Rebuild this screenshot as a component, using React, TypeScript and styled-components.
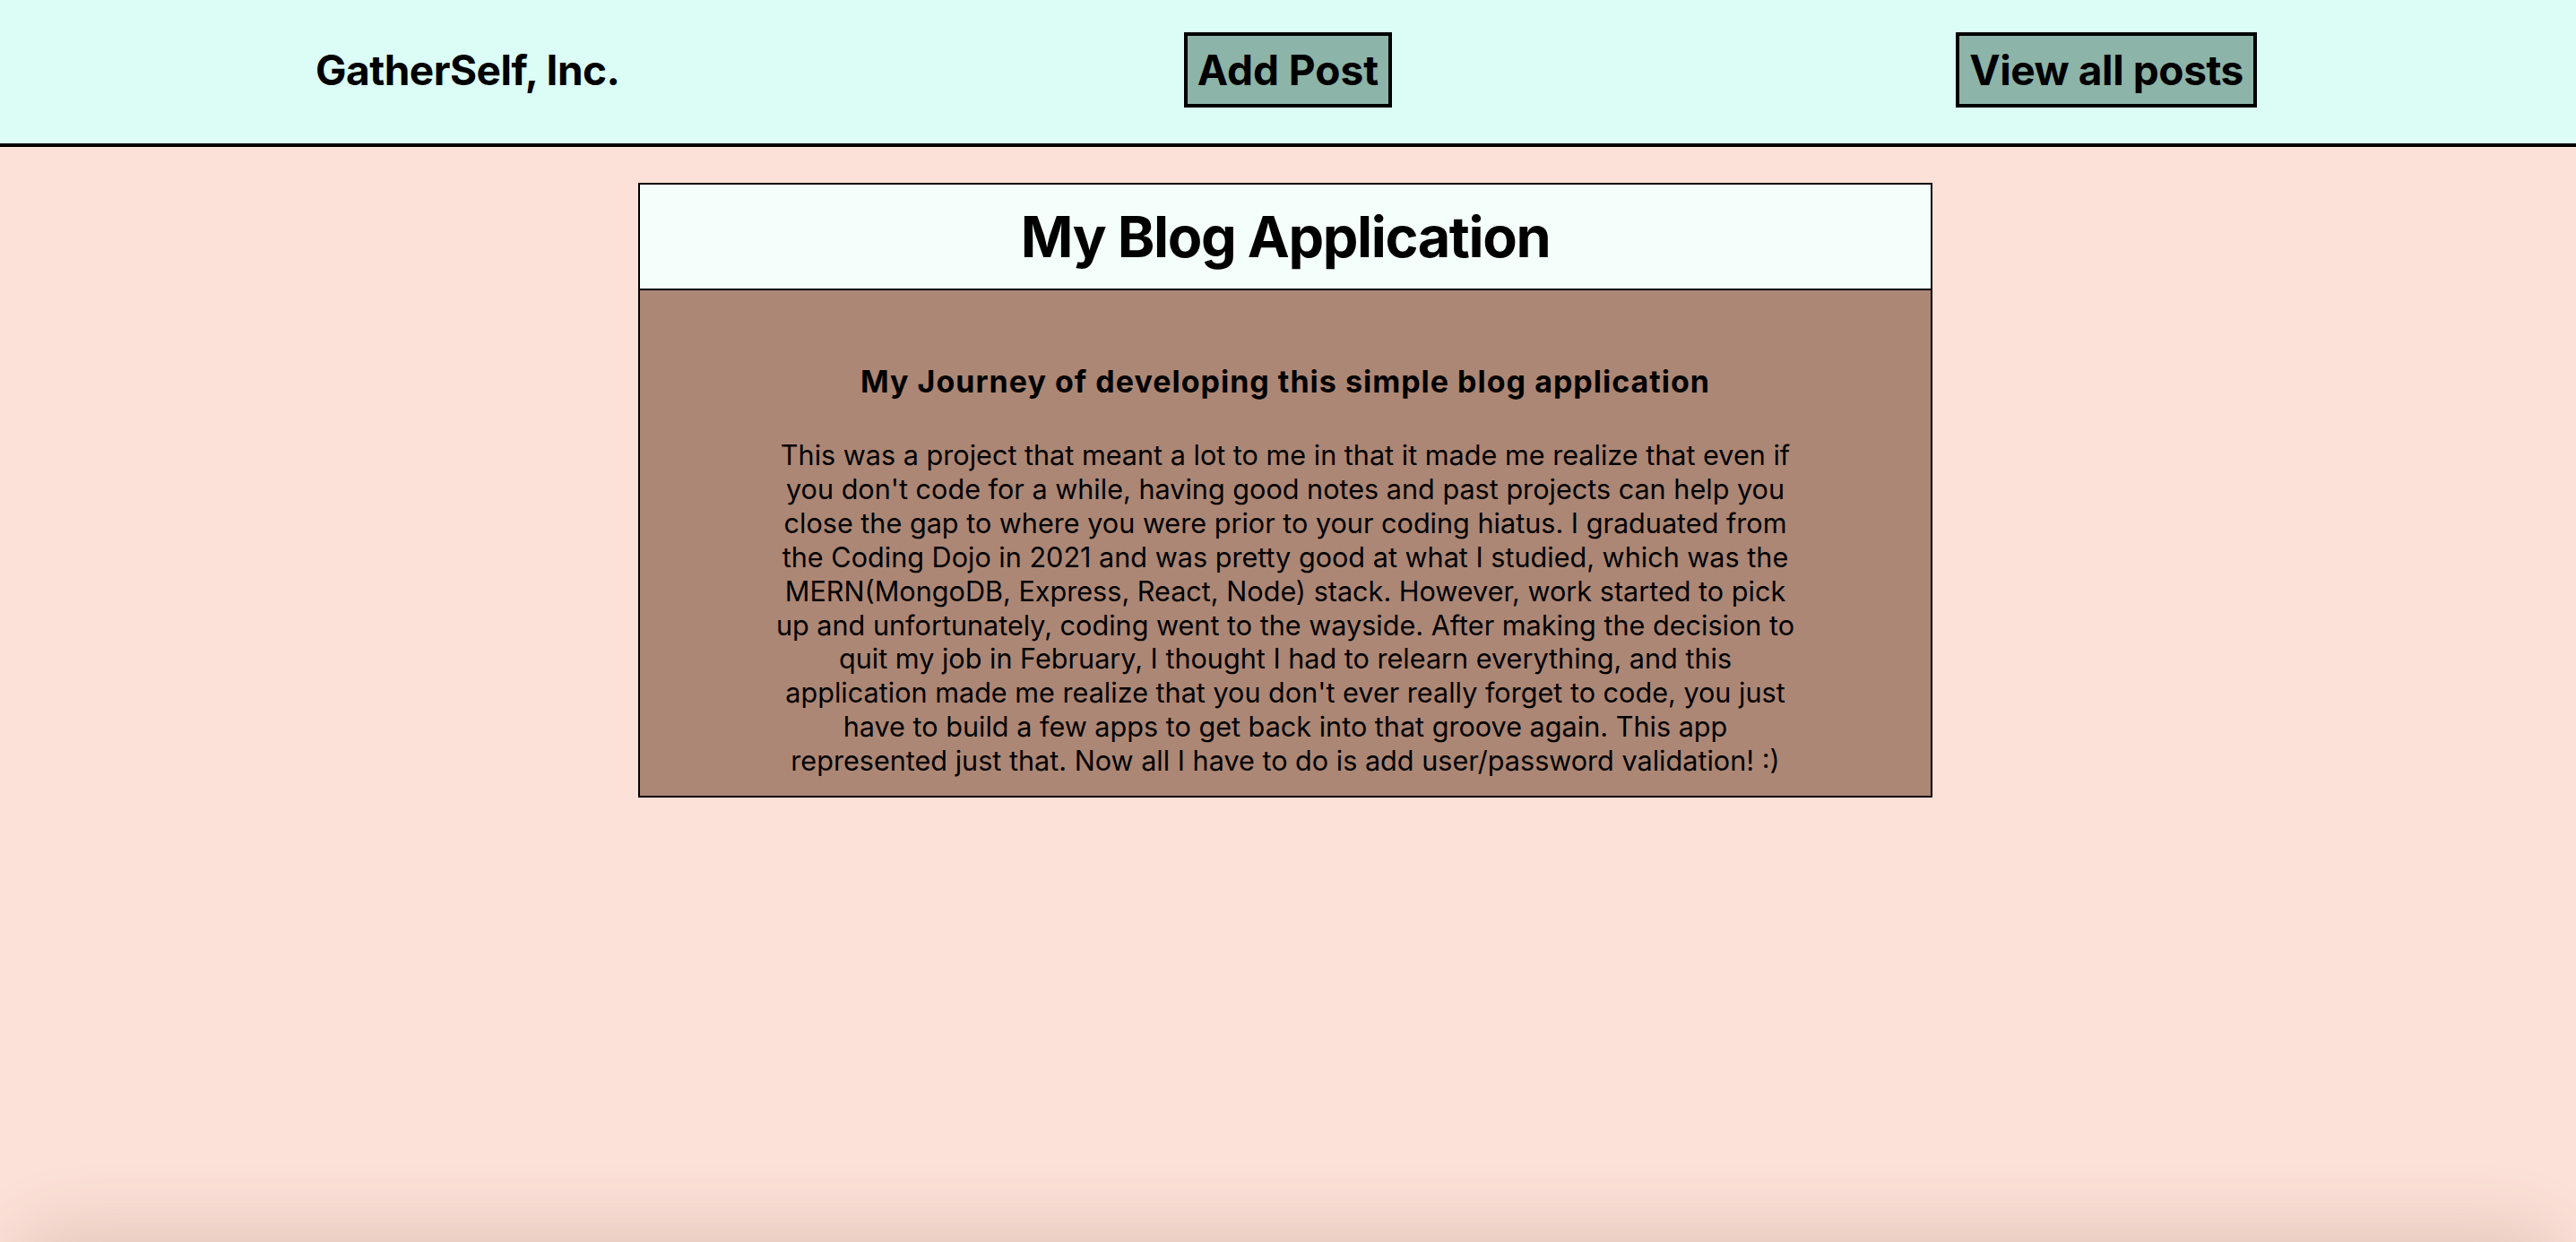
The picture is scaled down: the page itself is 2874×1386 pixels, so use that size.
import React from "react";
import styled, { createGlobalStyle } from "styled-components";

const GlobalStyle = createGlobalStyle`
  html, body {
    margin: 0;
    padding: 0;
    background: #fce1d8;
    font-family: Inter, "Noto Sans", "Liberation Sans", sans-serif;
    color: #000;
  }
  * { box-sizing: border-box; }
`;

const Page = styled.div`
  min-height: 100vh;
  background: #fce1d8;
`;

const Header = styled.header`
  height: 164px;
  display: flex;
  align-items: baseline;
  justify-content: space-between;
  padding: 36px 356px 0 352px;
  background: #dbfdf5;
  border-bottom: 4px solid #000;
`;

const Brand = styled.h2`
  margin: 0;
  font-size: 46px;
  line-height: 56px;
  font-weight: 700;
  letter-spacing: -0.5px;
`;

const NavButton = styled.button<{ $tight?: boolean }>`
  margin: 0;
  padding: 10px 11px;
  background: #8db4a8;
  border: 4px solid #000;
  font-family: inherit;
  font-size: 46px;
  line-height: 56px;
  font-weight: 700;
  letter-spacing: ${(p) => (p.$tight ? "-0.4px" : "0")};
  color: #000;
  cursor: pointer;
`;

const Main = styled.main`
  display: flex;
  justify-content: center;
  padding: 40px 6px 0 0;
`;

const Card = styled.section`
  width: 1444px;
  border: 2px solid #000;
`;

const TitleBar = styled.div`
  background: #f4fffb;
  border-bottom: 2px solid #000;
  padding: 20px 0;
  text-align: center;
`;

const Title = styled.h1`
  margin: 0;
  font-size: 63px;
  line-height: 76px;
  font-weight: 700;
  letter-spacing: -1.4px;
`;

const PostBody = styled.article`
  background: #ad8775;
  padding: 83px 0 20px;
  display: flex;
  flex-direction: column;
  align-items: center;
  text-align: center;
`;

const PostTitle = styled.h4`
  margin: 0 0 44px;
  font-size: 34px;
  line-height: 38px;
  font-weight: 700;
  letter-spacing: 1px;
`;

const PostText = styled.p`
  margin: 0;
  width: 1300px;
  font-size: 30.6px;
  line-height: 37.9px;
  font-weight: 400;
`;

const ViewportShade = styled.div`
  position: fixed;
  left: 30px;
  right: 30px;
  bottom: -90px;
  height: 90px;
  border-radius: 50px;
  box-shadow: 0 0 70px 20px rgba(110, 70, 50, 0.16);
  pointer-events: none;
`;

const lines = [
  "This was a project that meant a lot to me in that it made me realize that even if",
  "you don't code for a while, having good notes and past projects can help you",
  "close the gap to where you were prior to your coding hiatus. I graduated from",
  "the Coding Dojo in 2021 and was pretty good at what I studied, which was the",
  "MERN(MongoDB, Express, React, Node) stack. However, work started to pick",
  "up and unfortunately, coding went to the wayside. After making the decision to",
  "quit my job in February, I thought I had to relearn everything, and this",
  "application made me realize that you don't ever really forget to code, you just",
  "have to build a few apps to get back into that groove again. This app",
  "represented just that. Now all I have to do is add user/password validation! :)",
];

export default function App() {
  return (
    <Page>
      <GlobalStyle />
      <Header>
        <Brand>GatherSelf, Inc.</Brand>
        <NavButton>Add Post</NavButton>
        <NavButton $tight>View all posts</NavButton>
      </Header>
      <Main>
        <Card>
          <TitleBar>
            <Title>My Blog Application</Title>
          </TitleBar>
          <PostBody>
            <PostTitle>My Journey of developing this simple blog application</PostTitle>
            <PostText>
              {lines.map((l, i) => (
                <React.Fragment key={i}>
                  {l}
                  {i < lines.length - 1 && <br />}
                </React.Fragment>
              ))}
            </PostText>
          </PostBody>
        </Card>
      </Main>
      <ViewportShade />
    </Page>
  );
}
